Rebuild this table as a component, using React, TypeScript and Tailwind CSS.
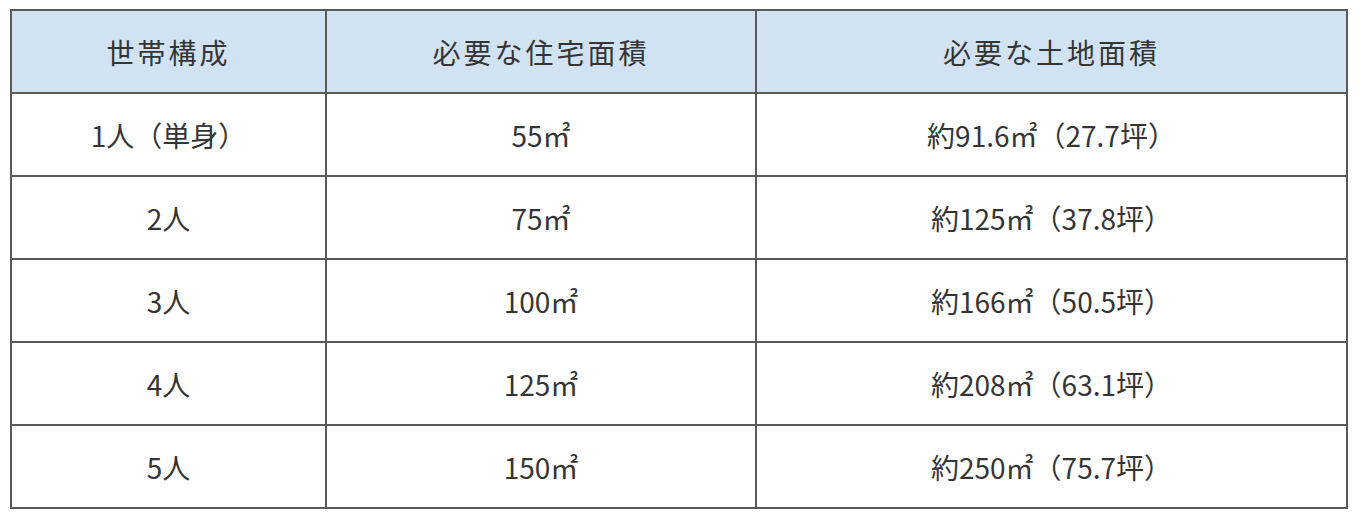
const rows = [
  ["1人（単身）", "55㎡", "約91.6㎡（27.7坪）"],
  ["2人", "75㎡", "約125㎡（37.8坪）"],
  ["3人", "100㎡", "約166㎡（50.5坪）"],
  ["4人", "125㎡", "約208㎡（63.1坪）"],
  ["5人", "150㎡", "約250㎡（75.7坪）"],
];

export default function App() {
  return (
    <div className="w-[1360px] h-[520px] bg-white pl-[10px] pt-[9px]" style={{ fontFamily: '"Noto Sans CJK JP", "Noto Sans", sans-serif' }}>
      <table className="w-[1338px] border-collapse border-2 border-[#5a5a5a] text-[28px] text-[#353535] table-fixed">
        <colgroup>
          <col className="w-[315px]" />
          <col className="w-[430px]" />
          <col />
        </colgroup>
        <thead>
          <tr className="h-[83px] bg-[#d1e2f3]">
            <th className="border-2 border-[#5a5a5a] font-normal text-center tracking-[3px]">世帯構成</th>
            <th className="border-2 border-[#5a5a5a] font-normal text-center tracking-[3px]">必要な住宅面積</th>
            <th className="border-2 border-[#5a5a5a] font-normal text-center tracking-[3px]">必要な土地面積</th>
          </tr>
        </thead>
        <tbody>
          {rows.map((r, i) => (
            <tr key={i} className="h-[83px]">
              {r.map((c, j) => (
                <td key={j} className="border-2 border-[#5a5a5a] text-center">{c}</td>
              ))}
            </tr>
          ))}
        </tbody>
      </table>
    </div>
  );
}
